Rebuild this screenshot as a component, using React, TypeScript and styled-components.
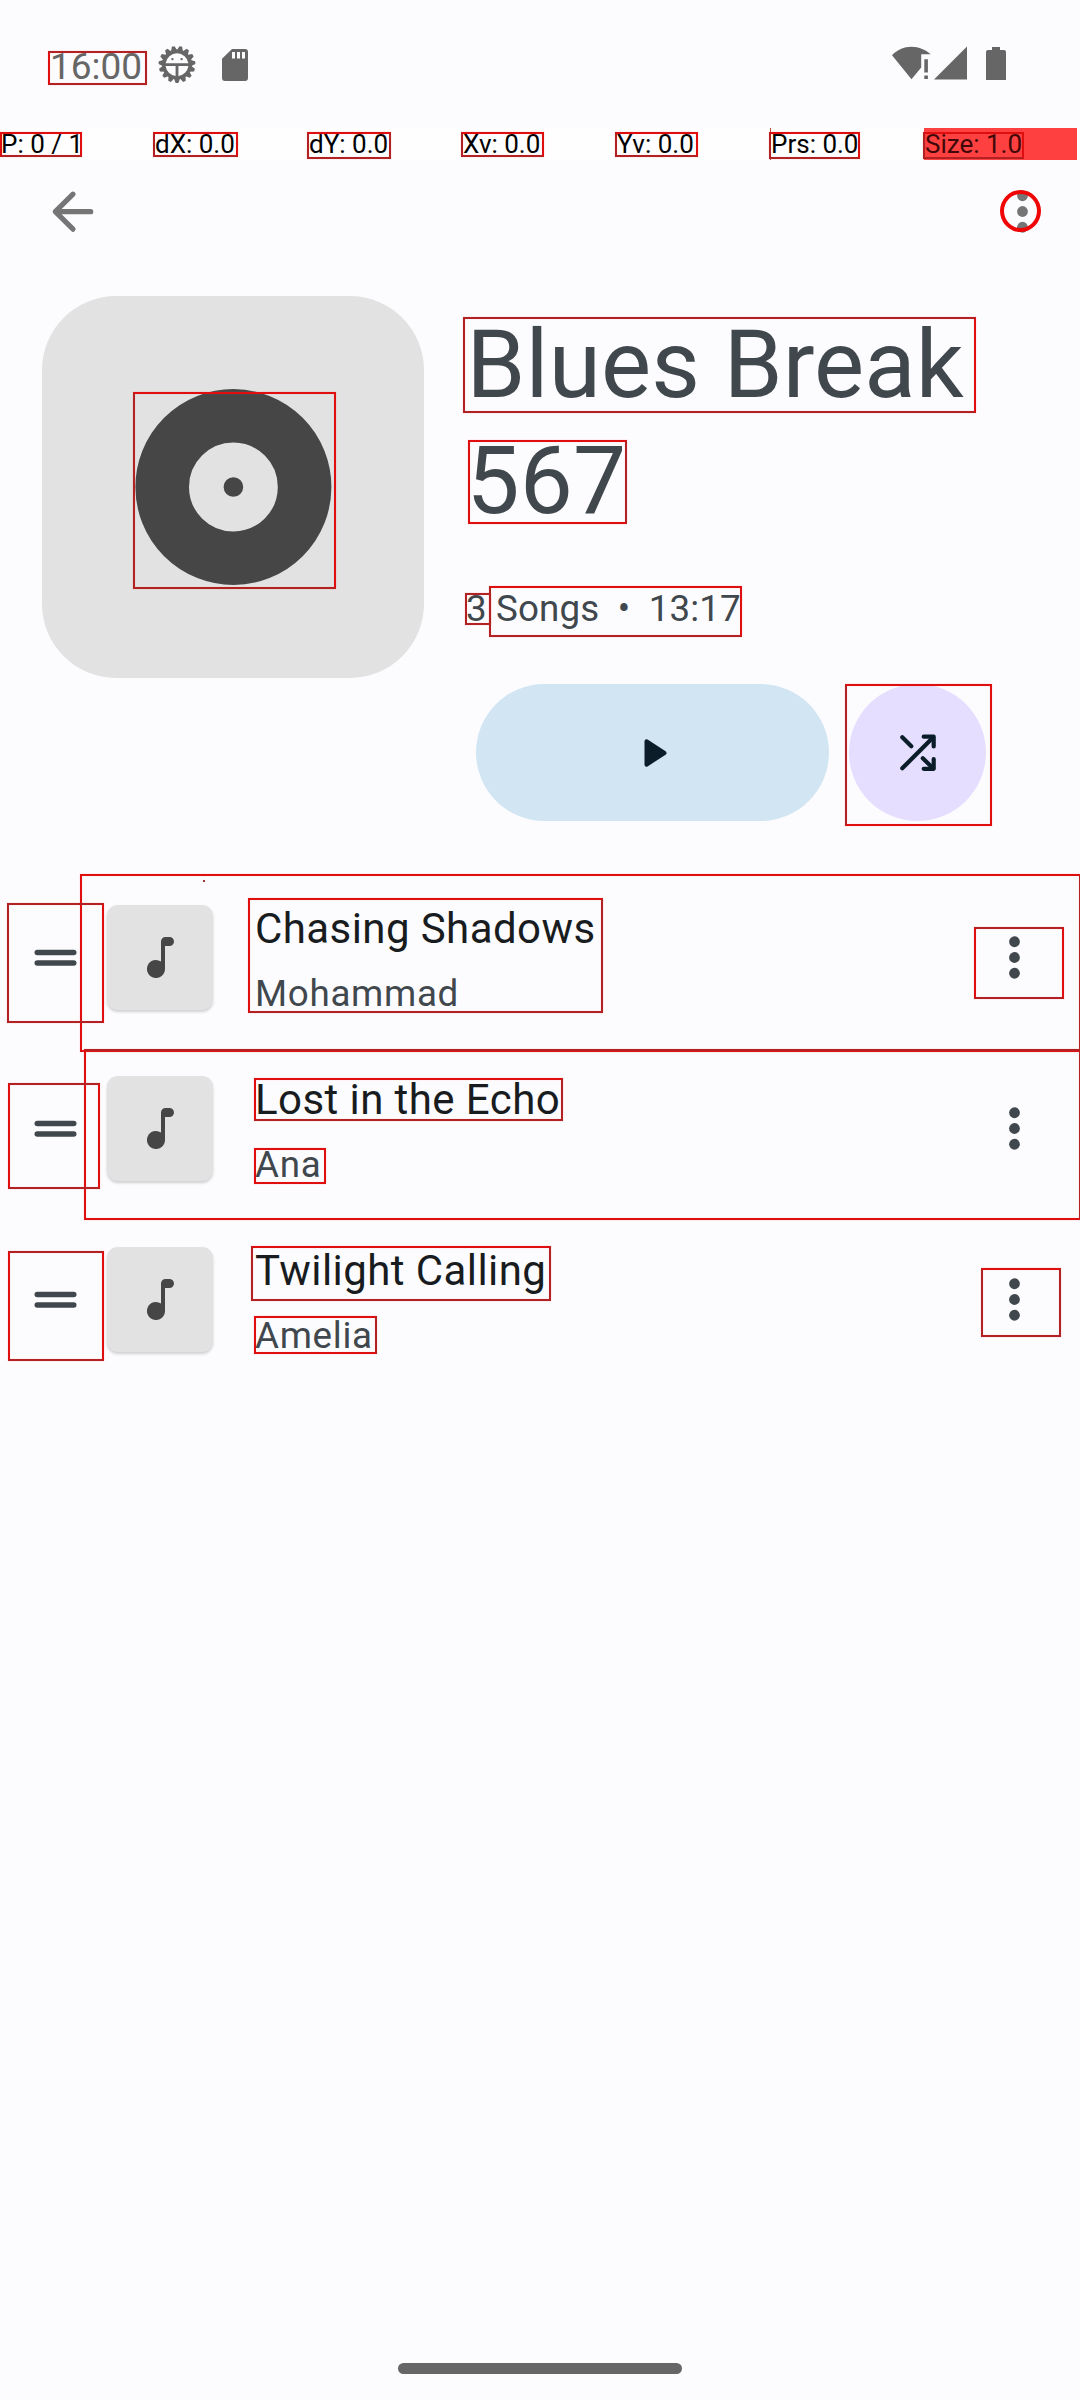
import React from "react";
import styled, { createGlobalStyle } from "styled-components";

const GlobalStyle = createGlobalStyle`
  * { box-sizing: border-box; }
  html, body { margin: 0; padding: 0; background: #fcfcff; }
  body { font-family: Roboto, "Noto Sans", sans-serif; }
`;

const Screen = styled.div`
  position: relative;
  width: 1080px;
  height: 2400px;
  overflow: hidden;
  display: flex;
  flex-direction: column;
  background: #fcfcff;
  color: #41484d;
`;

/* ---------- system status bar ---------- */

const StatusBar = styled.header`
  flex: none;
  height: 128px;
  padding: 0 74px 0 50px;
  display: flex;
  align-items: flex-start;
  justify-content: space-between;
  color: #666;
`;

const StatusGroup = styled.div<{ $top: number }>`
  display: flex;
  align-items: flex-start;
  padding-top: ${(p) => p.$top}px;
`;

const Clock = styled.span`
  width: 108px;
  font-size: 37px;
  line-height: 45px;
`;

const SdSlot = styled.span`
  display: flex;
  margin: 5px 0 0 26px;
`;

const SignalSlot = styled.span`
  display: flex;
  gap: 3px;
  margin-right: 19px;
`;

/* ---------- pointer read-out ---------- */

const PointerBar = styled.div`
  flex: none;
  height: 32px;
  width: 1077px;
  display: grid;
  grid-template-columns: repeat(7, 1fr);
  column-gap: 1px;
`;

const PointerCell = styled.span<{ $hot?: boolean; $edge?: boolean }>`
  padding-left: 1px;
  font-size: 26px;
  line-height: 32px;
  white-space: nowrap;
  color: ${(p) => (p.$hot ? "#400808" : "#000")};
  background: ${(p) => (p.$hot ? "#ff4040" : "#fefeff")};
  box-shadow: ${(p) => (p.$edge ? "inset 1px 0 0 #c04040" : "none")};
`;

/* ---------- app bar ---------- */

const AppBar = styled.nav`
  flex: none;
  height: 103px;
  padding: 0 26px 0 42px;
  display: flex;
  align-items: center;
  justify-content: space-between;
  color: #757575;
`;

const IconButton = styled.button`
  flex: none;
  display: flex;
  width: 63px;
  height: 63px;
  padding: 0;
  border: 0;
  background: none;
  color: inherit;
`;

/* ---------- playlist header ---------- */

const Hero = styled.section`
  flex: none;
  display: flex;
  gap: 41px;
  padding: 33px 40px 0 42px;
`;

const Cover = styled.div`
  flex: none;
  width: 382px;
  height: 382px;
  border-radius: 74px;
  background: #e2e2e2;
  display: flex;
  align-items: center;
  justify-content: center;
`;

const Info = styled.div`
  flex: 1;
  padding-top: 11px;
`;

const Title = styled.h1`
  margin: 0 0 0 1.5px;
  width: 520px;
  font-size: 94.5px;
  font-weight: 400;
  line-height: 116px;
  letter-spacing: 0.15px;
`;

const Meta = styled.p`
  margin: 44px 0 0 1px;
  font-size: 36.75px;
  line-height: 52px;
  letter-spacing: 0.12px;
  white-space: pre;
`;

const Actions = styled.div`
  display: flex;
  gap: 20px;
  margin: 49px 0 0 11px;
`;

const ActionButton = styled.button<{ $width: number; $tone: string; $nudge?: number }>`
  width: ${(p) => p.$width}px;
  height: 137px;
  padding: 0 0 0 ${(p) => p.$nudge ?? 0}px;
  border: 0;
  border-radius: 69px;
  background: ${(p) => p.$tone};
  color: #0b1d29;
  display: flex;
  align-items: center;
  justify-content: center;
`;

/* ---------- song list ---------- */

const SongList = styled.ul`
  flex: none;
  margin: 51px 0 0;
  padding: 0;
  list-style: none;
`;

const SongRow = styled.li`
  height: 171px;
  padding: 0 34px 0 24px;
  display: flex;
  align-items: center;
`;

const Thumb = styled.div`
  flex: none;
  width: 106px;
  height: 105px;
  margin: 0 42px 0 20px;
  border-radius: 11px;
  background: #e2e2e2;
  box-shadow: 0 2px 3px rgba(0, 0, 0, 0.18);
  display: flex;
  align-items: center;
  justify-content: center;
`;

const SongText = styled.div`
  flex: 1;
  padding-top: 9px;
  white-space: nowrap;
`;

const SongName = styled.div`
  font-size: 42px;
  line-height: 64px;
  letter-spacing: 0.42px;
  color: #191c1e;
`;

const Artist = styled.div`
  font-size: 36.75px;
  line-height: 66px;
  letter-spacing: 0.7px;
`;

/* ---------- gesture bar ---------- */

const GestureBar = styled.footer`
  margin-top: auto;
  height: 37px;
  display: flex;
  justify-content: center;
`;

const GestureHandle = styled.div`
  width: 284px;
  height: 11px;
  border-radius: 6px;
  background: #666;
`;

/* ---------- red annotation marks over the screen ---------- */

const edge = (n: number) => (n % 2 ? "#b32222" : "#df0f0f");

const Mark = styled.div<{ $box: number[] }>`
  position: absolute;
  left: ${(p) => p.$box[0]}px;
  top: ${(p) => p.$box[1]}px;
  width: ${(p) => p.$box[2] - p.$box[0]}px;
  height: ${(p) => p.$box[3] - p.$box[1]}px;
  border: 2px solid;
  border-color: ${(p) =>
    [edge(p.$box[1]), edge(p.$box[2]), edge(p.$box[3]), edge(p.$box[0])].join(" ")};
  box-shadow: 0 0 1px rgba(255, 90, 90, 0.5), inset 0 0 1px rgba(255, 90, 90, 0.5);
`;

const RingMark = styled.div`
  position: absolute;
  left: 1000px;
  top: 190px;
  width: 41px;
  height: 42px;
  border: 4px solid #f00505;
  border-radius: 50%;
`;

const DotMark = styled.div`
  position: absolute;
  left: 203px;
  top: 880px;
  width: 2px;
  height: 2px;
  background: #9c3a3a;
  box-shadow: 0 0 1px #ff9a9a;
`;

const marks: number[][] = [
  [48, 51, 147, 85],
  [0, 132, 82, 157],
  [153, 132, 238, 157],
  [307, 132, 391, 159],
  [461, 132, 544, 157],
  [615, 132, 698, 157],
  [769, 132, 860, 159],
  [923, 132, 1024, 159],
  [133, 392, 336, 589],
  [463, 317, 976, 413],
  [468, 440, 627, 524],
  [465, 593, 491, 625],
  [489, 586, 742, 637],
  [845, 684, 992, 826],
  [80, 874, 1081, 1052],
  [84, 1049, 1081, 1220],
  [7, 903, 104, 1023],
  [8, 1083, 100, 1189],
  [8, 1251, 104, 1361],
  [248, 898, 603, 1013],
  [254, 1078, 563, 1121],
  [254, 1148, 326, 1184],
  [251, 1246, 551, 1301],
  [254, 1316, 377, 1354],
  [974, 927, 1064, 999],
  [981, 1268, 1061, 1337],
];

/* ---------- icons ---------- */

const BugIcon = () => {
  const teeth = Array.from({ length: 15 }, (_, i) => i * 24 + 12);
  return (
    <svg width="38" height="40" viewBox="-19 -20.500 38 40">
      <g fill="currentColor">
        {teeth.map((a) => (
          <path key={a} transform={`rotate(${a})`} d="M-3.4-13-1.4-18.4h2.8L3.4-13z" />
        ))}
        <path
          fillRule="evenodd"
          d="M0-15a15 15 0 1 0 0 30 15 15 0 0 0 0-30zM-11.4-1.2a11.5 11.5 0 0 1 22.8 0zM-11.4 1.6H-1.4V11.4A11.5 11.5 0 0 1-11.4 1.6zM1.4 1.6h10A11.5 11.5 0 0 1 1.4 11.4z"
        />
        <circle cx="-4.600" cy="-5.4" r="1.2" />
        <circle cx="4.600" cy="-5.4" r="1.2" />
      </g>
    </svg>
  );
};

const SdIcon = () => (
  <svg width="26" height="32" viewBox="0 0 26 32">
    <path
      fill="currentColor"
      fillRule="evenodd"
      d="M10 0h13a3 3 0 0 1 3 3v26a3 3 0 0 1-3 3H3a3 3 0 0 1-3-3V9.700zM10 3v6.500h3V3zM15 3v6.500h3V3zM20 3v6.500h3V3z"
    />
  </svg>
);

const WifiIcon = () => (
  <svg width="39" height="34" viewBox="0 0 39 34">
    <path
      fill="currentColor"
      d="M19.500 33.300 0 9.300C5 4 12 .8 19.500.8S34 4 38.700 8.300H29.200V21.500zM32.300 13.300h3.600V26.500h-3.600zM32.300 29.500h3.600v3.500h-3.600z"
    />
  </svg>
);

const SignalIcon = () => (
  <svg width="33" height="34" viewBox="0 0 33 34">
    <path fill="currentColor" d="M33 .5V33.500H0z" />
  </svg>
);

const BatteryIcon = () => (
  <svg width="20" height="34" viewBox="0 0 20 34">
    <path
      fill="currentColor"
      d="M6 1h8v3h4a2 2 0 0 1 2 2v28H0V6a2 2 0 0 1 2-2h4z"
    />
  </svg>
);

const BackIcon = () => (
  <svg width="63" height="63" viewBox="0 0 63 63">
    <path
      d="M48.700 31.700H14M31 14.200 13.300 31.700 31 49.200"
      fill="none"
      stroke="currentColor"
      strokeWidth="5.200"
      strokeLinecap="round"
      strokeLinejoin="round"
    />
  </svg>
);

const MoreIcon = () => (
  <svg width="63" height="63" viewBox="0 0 24 24" fill="currentColor">
    <circle cx="12" cy="6" r="2.050" />
    <circle cx="12" cy="12" r="2.050" />
    <circle cx="12" cy="18" r="2.050" />
  </svg>
);

const DragIcon = () => (
  <svg width="63" height="63" viewBox="0 0 24 24" fill="currentColor">
    <rect x="4" y="9" width="16" height="2.100" rx="1.050" />
    <rect x="4" y="13" width="16" height="2.100" rx="1.050" />
  </svg>
);

const DiscIcon = () => (
  <svg width="198" height="198" viewBox="-99.400 -99 198 198">
    <circle r="71.200" fill="none" stroke="#464646" strokeWidth="53.600" />
    <circle r="9.800" fill="#464646" />
  </svg>
);

const NoteIcon = () => (
  <svg width="27" height="41" viewBox="0 0 27 41">
    <path
      fill="#464646"
      d="M14 4.500A4.500 4.500 0 0 1 18.500 0h4a4.500 4.500 0 0 1 0 9H18V32A9 9 0 1 1 14 24.500z"
    />
  </svg>
);

const PlayIcon = () => (
  <svg width="25" height="28" viewBox="0 0 25 28">
    <path
      d="M3.500 2.300v23.400L21.500 14z"
      fill="currentColor"
      stroke="currentColor"
      strokeWidth="4"
      strokeLinejoin="round"
    />
  </svg>
);

const ShuffleIcon = () => (
  <svg width="36" height="37" viewBox="0 0 36 37">
    <g
      fill="none"
      stroke="currentColor"
      strokeWidth="4.200"
      strokeLinecap="round"
      strokeLinejoin="round"
    >
      <path d="M2.300 34.300 33 3.500M2.300 3.200 11.300 12.200M22.800 24.200 33 34.300" />
      <path d="M23.700 2.700H33.700V12.500M33.700 25.200V34.800H23.700" />
    </g>
  </svg>
);

/* ---------- content ---------- */

const pointerValues = ["P: 0 / 1", "dX: 0.0", "dY: 0.0", "Xv: 0.0", "Yv: 0.0", "Prs: 0.0", "Size: 1.0"];

const songs = [
  { name: "Chasing Shadows", artist: "Mohammad" },
  { name: "Lost in the Echo", artist: "Ana" },
  { name: "Twilight Calling", artist: "Amelia" },
];

export default function App() {
  return (
    <>
      <GlobalStyle />
      <Screen>
        <StatusBar>
          <StatusGroup $top={44}>
            <Clock>16:00</Clock>
            <BugIcon />
            <SdSlot>
              <SdIcon />
            </SdSlot>
          </StatusGroup>
          <StatusGroup $top={46}>
            <SignalSlot>
              <WifiIcon />
              <SignalIcon />
            </SignalSlot>
            <BatteryIcon />
          </StatusGroup>
        </StatusBar>

        <PointerBar>
          {pointerValues.map((text, i) => (
            <PointerCell key={text} $edge={i === 5} $hot={i === 6}>
              {text}
            </PointerCell>
          ))}
        </PointerBar>

        <AppBar>
          <IconButton aria-label="Back">
            <BackIcon />
          </IconButton>
          <IconButton aria-label="More">
            <MoreIcon />
          </IconButton>
        </AppBar>

        <Hero>
          <Cover>
            <DiscIcon />
          </Cover>
          <Info>
            <Title>Blues Break 567</Title>
            <Meta>{"3 Songs  •  13:17"}</Meta>
            <Actions>
              <ActionButton $width={353} $tone="#d2e5f3" $nudge={5} aria-label="Play">
                <PlayIcon />
              </ActionButton>
              <ActionButton $width={137} $tone="#e5deff" aria-label="Shuffle">
                <ShuffleIcon />
              </ActionButton>
            </Actions>
          </Info>
        </Hero>

        <SongList>
          {songs.map((song) => (
            <SongRow key={song.name}>
              <IconButton aria-label="Reorder">
                <DragIcon />
              </IconButton>
              <Thumb>
                <NoteIcon />
              </Thumb>
              <SongText>
                <SongName>{song.name}</SongName>
                <Artist>{song.artist}</Artist>
              </SongText>
              <IconButton aria-label="Song options">
                <MoreIcon />
              </IconButton>
            </SongRow>
          ))}
        </SongList>

        <GestureBar>
          <GestureHandle />
        </GestureBar>

        {marks.map((box) => (
          <Mark key={box.join()} $box={box} />
        ))}
        <RingMark />
        <DotMark />
      </Screen>
    </>
  );
}
